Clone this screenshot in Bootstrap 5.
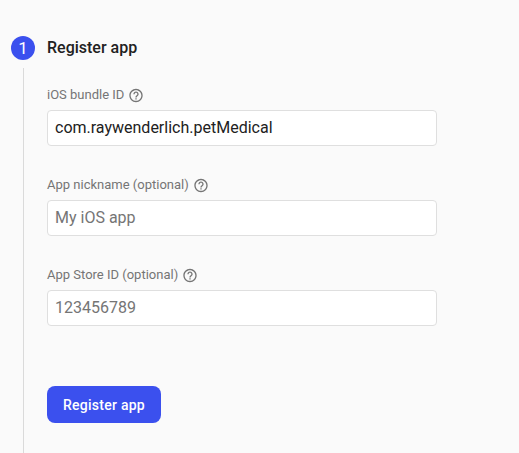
<!DOCTYPE html>
<html lang="en">
<head>
<meta charset="utf-8">
<meta name="viewport" content="width=device-width, initial-scale=1">
<title>Register app</title>
<link rel="stylesheet" href="https://cdn.jsdelivr.net/npm/bootstrap@5.3.0/dist/css/bootstrap.min.css">
<style>
body { background: #fafafa; font-family: Roboto, "Liberation Sans", sans-serif; color: #212121; }
.step { height: 453px; padding: 36px 0 0 11px; }
.step-rail { width: 24px; }
.step-number { width: 24px; height: 24px; background: #3b50ee; font-size: 17px; font-weight: 400; line-height: 25px; }
.step-line { width: 1px; background: #dadada; margin-top: 8px; }
.step-body { width: 390px; margin-left: 12px; }
.step-title { font-size: 16px; font-weight: 500; line-height: 24px; margin-bottom: 25px; }
.field { height: 90px; }
.field .form-label { height: 20px; font-size: 13px; line-height: 20px; color: #757575; margin-bottom: 5px; }
.help { width: 16px; height: 16px; fill: #757575; margin: 0 0 0 4px; }
.field .form-control { height: 36px; border-color: #dfdfdf; border-radius: 4px; padding: 0 7px 1px; font-size: 16px; color: #212121; background: #fff; }
.field .form-control::placeholder { color: #757575; opacity: 1; }
.btn-register { --bs-btn-bg: #3b50ee; --bs-btn-color: #fff; --bs-btn-hover-bg: #2f43d8; --bs-btn-hover-color: #fff; width: 114px; height: 37px; margin-top: 31px; padding: 1px 0 0; border: 0; border-radius: 8px; font-size: 14px; font-weight: 500; letter-spacing: .25px; }
</style>
</head>
<body class="overflow-hidden">
<svg class="d-none" xmlns="http://www.w3.org/2000/svg">
  <symbol id="help-icon" viewBox="0 -.75 24 24"><path d="M11 18h2v-2h-2v2zm1-16C6.480 2 2 6.480 2 12s4.480 10 10 10 10-4.480 10-10S17.520 2 12 2zm0 18c-4.410 0-8-3.590-8-8s3.590-8 8-8 8 3.590 8 8-3.590 8-8 8zm0-14c-2.210 0-4 1.790-4 4h2c0-1.100.9-2 2-2s2 .9 2 2c0 2-3 1.750-3 5h2c0-2.250 3-2.500 3-5 0-2.210-1.790-4-4-4z"/></symbol>
</svg>
<main class="step d-flex">
  <div class="step-rail d-flex flex-column align-items-center flex-shrink-0">
    <div class="step-number rounded-circle text-white text-center flex-shrink-0">1</div>
    <div class="step-line flex-grow-1"></div>
  </div>
  <form class="step-body">
    <h1 class="step-title">Register app</h1>
    <div class="field">
      <label class="form-label d-flex align-items-center" for="bundle">iOS bundle ID<svg class="help"><use href="#help-icon"/></svg></label>
      <input class="form-control shadow-none" id="bundle" type="text" value="com.raywenderlich.petMedical">
    </div>
    <div class="field">
      <label class="form-label d-flex align-items-center" for="nickname">App nickname (optional)<svg class="help"><use href="#help-icon"/></svg></label>
      <input class="form-control shadow-none" id="nickname" type="text" placeholder="My iOS app">
    </div>
    <div class="field">
      <label class="form-label d-flex align-items-center" for="store">App Store ID (optional)<svg class="help"><use href="#help-icon"/></svg></label>
      <input class="form-control shadow-none" id="store" type="text" placeholder="123456789">
    </div>
    <button class="btn btn-register" type="button">Register app</button>
  </form>
</main>
<script src="https://cdn.jsdelivr.net/npm/bootstrap@5.3.0/dist/js/bootstrap.bundle.min.js"></script>
</body>
</html>
